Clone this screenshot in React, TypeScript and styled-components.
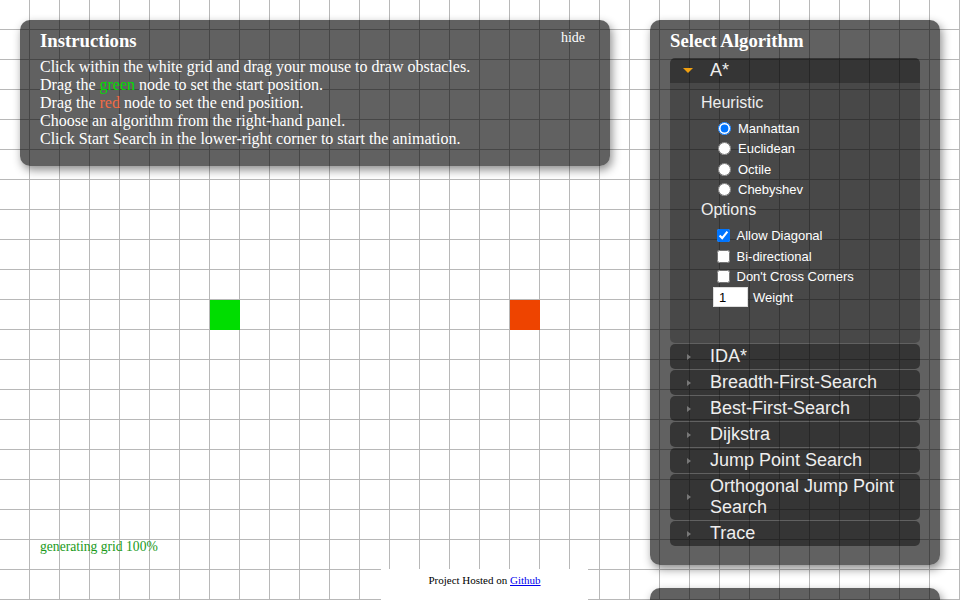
import React from "react";
import styled, { createGlobalStyle } from "styled-components";

const GlobalStyle = createGlobalStyle`
    html, body {
        margin: 0;
        padding: 0;
        width: 960px;
        height: 600px;
        overflow: hidden;
        background: #fff;
    }
    body {
        font-family: "Liberation Serif", "Times New Roman", serif;
    }
`;

const CELL = 30;

const algorithms = [
    "IDA*",
    "Breadth-First-Search",
    "Best-First-Search",
    "Dijkstra",
    "Jump Point Search",
    "Orthogonal Jump Point Search",
    "Trace",
];

const heuristics = ["Manhattan", "Euclidean", "Octile", "Chebyshev"];

const options = [
    {label: "Allow Diagonal", checked: true},
    {label: "Bi-directional", checked: false},
    {label: "Don't Cross Corners", checked: false},
];

const App = () => {
    return (
        <>
            <GlobalStyle/>
            <Canvas>
                <GridNode $col={7} $row={10} $color="#00dd00"/>
                <GridNode $col={17} $row={10} $color="#ee4400"/>

                <Panel $top={20} $left={20} $width={550} $bottom={18.5}>
                    <Title>Instructions</Title>
                    <HideLink>hide</HideLink>
                    <InstructionText>
                        Click within the white grid and drag your mouse to draw obstacles.<br/>
                        Drag the <Green>green</Green> node to set the start position.<br/>
                        Drag the <Red>red</Red> node to set the end position.<br/>
                        Choose an algorithm from the right-hand panel.<br/>
                        Click Start Search in the lower-right corner to start the animation.
                    </InstructionText>
                </Panel>

                <Panel $top={20} $left={650} $width={250} $bottom={19}>
                    <Title>Select Algorithm</Title>
                    <Accordion>
                        <Header $active>
                            <Caret><ArrowDown/></Caret>
                            <HeaderText>A*</HeaderText>
                        </Header>
                        <Content>
                            <SectionLabel>Heuristic</SectionLabel>
                            {heuristics.map((h, i) =>
                                <OptionRow key={`heuristic-${i}`} $indent={17}>
                                    <Radio type="radio" name="heuristic" defaultChecked={i === 0}/>
                                    <span>{h}</span>
                                </OptionRow>
                            )}
                            <SectionLabel>Options</SectionLabel>
                            {options.map((o, i) =>
                                <OptionRow key={`option-${i}`} $indent={16}>
                                    <Check type="checkbox" defaultChecked={o.checked}/>
                                    <span>{o.label}</span>
                                </OptionRow>
                            )}
                            <OptionRow $indent={12}>
                                <WeightInput type="text" defaultValue="1"/>
                                <span>Weight</span>
                            </OptionRow>
                        </Content>
                        {algorithms.map((name, index) =>
                            <Header key={`algo-${index}`}>
                                <Caret><ArrowRight/></Caret>
                                <HeaderText>{name}</HeaderText>
                            </Header>
                        )}
                    </Accordion>
                </Panel>

                <Panel $top={588} $left={650} $width={250} $bottom={20}>
                    <PlaceHolder/>
                </Panel>

                <Stats>generating grid 100%</Stats>
                <Footer>
                    Project Hosted on <a href="#">Github</a>
                </Footer>
            </Canvas>
        </>
    );
};
export default App

const Canvas = styled.div`
    position: relative;
    width: 960px;
    height: 600px;
    overflow: hidden;
    background-color: #fff;
    background-image:
        linear-gradient(to right, #b8b8b8 1px, transparent 1px),
        linear-gradient(to bottom, #b8b8b8 1px, transparent 1px);
    background-size: ${CELL}px ${CELL}px;
    background-position: -1px -1px;
`;

const GridNode = styled.div<{$col: number; $row: number; $color: string}>`
    position: absolute;
    left: ${p => p.$col * CELL}px;
    top: ${p => p.$row * CELL}px;
    width: ${CELL}px;
    height: ${CELL}px;
    background: ${p => p.$color};
`;

const Panel = styled.div<{$top: number; $left: number; $width: number; $bottom: number}>`
    position: absolute;
    top: ${p => p.$top}px;
    left: ${p => p.$left}px;
    width: ${p => p.$width}px;
    padding: 10px 20px ${p => p.$bottom}px;
    background: rgba(0, 0, 0, 0.62);
    border-radius: 10px;
    box-shadow: 2px 4px 10px rgba(0, 0, 0, 0.45);
    color: #fff;
`;

const Title = styled.h3`
    margin: 0;
    font-size: 18.72px;
    line-height: 22px;
    font-weight: bold;
`;

const HideLink = styled.span`
    position: absolute;
    top: 10px;
    right: 25px;
    font-size: 14px;
    line-height: 15px;
    cursor: pointer;
`;

const InstructionText = styled.div`
    margin-top: 5.5px;
    font-size: 16px;
    line-height: 18px;
`;

const Green = styled.span`
    color: #00dd00;
`;

const Red = styled.span`
    color: #f26b45;
`;

const Accordion = styled.div`
    margin-top: 6px;
    font-family: "Liberation Sans", Arial, sans-serif;
`;

const Header = styled.div<{$active?: boolean}>`
    display: flex;
    align-items: center;
    margin-top: 1px;
    padding: 2px 10px 2px 0;
    background: rgba(0, 0, 0, 0.45);
    border-radius: ${p => p.$active ? "5px 5px 0 0" : "5px"};
    color: #eee;
    font-size: 18px;
    line-height: 21px;
    &:first-child {
        margin-top: 0;
    }
`;

const Caret = styled.span`
    flex: 0 0 40px;
    display: flex;
    align-items: center;
    padding-left: 13px;
    box-sizing: border-box;
`;

const ArrowDown = styled.span`
    width: 0;
    height: 0;
    border-left: 5px solid transparent;
    border-right: 5px solid transparent;
    border-top: 5px solid #f0a010;
`;

const ArrowRight = styled.span`
    width: 0;
    height: 0;
    margin-left: 4px;
    border-top: 3px solid transparent;
    border-bottom: 3px solid transparent;
    border-left: 4px solid #777;
`;

const HeaderText = styled.span`
    flex: 1;
`;

const Content = styled.div`
    height: 260px;
    box-sizing: border-box;
    padding: 9.5px 10px 0 31px;
    background: rgba(0, 0, 0, 0.25);
    border-radius: 0 0 5px 5px;
    color: #eee;
`;

const SectionLabel = styled.div`
    font-size: 16px;
    line-height: 19px;
    margin-bottom: 6.5px;
`;

const OptionRow = styled.label<{$indent: number}>`
    display: flex;
    align-items: center;
    height: 20.5px;
    padding-left: ${p => p.$indent}px;
    font-size: 13px;
    color: #fff;
`;

const Radio = styled.input`
    width: 13px;
    height: 13px;
    margin: 0 7px 0 0;
`;

const Check = styled.input`
    width: 13px;
    height: 13px;
    margin: 0 6.5px 0 0;
`;

const WeightInput = styled.input`
    width: 35px;
    height: 20px;
    box-sizing: border-box;
    margin: 0 5px 0 0;
    padding: 0 5px;
    border: 1px solid #ddd;
    background: #fff;
    color: #000;
    font-family: "Liberation Sans", Arial, sans-serif;
    font-size: 13px;
`;

const PlaceHolder = styled.div`
    height: 60px;
`;

const Stats = styled.div`
    position: absolute;
    left: 40px;
    top: 539px;
    font-size: 13.6px;
    line-height: 16px;
    color: #1a9a1a;
`;

const Footer = styled.div`
    position: absolute;
    left: 381px;
    top: 569px;
    width: 207px;
    height: 31px;
    box-sizing: border-box;
    padding-top: 4px;
    background: #fff;
    text-align: center;
    font-size: 11px;
    line-height: 14px;
    color: #000;
    a {
        color: #0000ee;
    }
`;
